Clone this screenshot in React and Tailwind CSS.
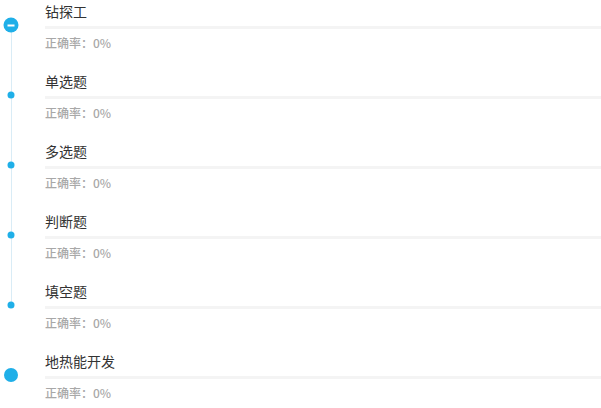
import React from 'react'

const items = [
  { title: '钻探工', kind: 'root' },
  { title: '单选题', kind: 'child' },
  { title: '多选题', kind: 'child' },
  { title: '判断题', kind: 'child' },
  { title: '填空题', kind: 'child', last: true },
  { title: '地热能开发', kind: 'big' },
]

function Marker({ kind }) {
  if (kind === 'root') {
    return (
      <div className="w-[15px] h-[15px] rounded-full bg-[#1fafe8] flex items-center justify-center">
        <div className="w-[7px] h-[2px] bg-white" />
      </div>
    )
  }
  if (kind === 'big') return <div className="w-[14px] h-[14px] rounded-full bg-[#1fafe8]" />
  return <div className="w-[7px] h-[7px] rounded-full bg-[#1fafe8]" />
}

export default function App() {
  return (
    <div className="w-[601px] h-[408px] bg-white overflow-hidden" style={{ fontFamily: '"Noto Sans CJK SC", "Noto Sans", sans-serif' }}>
      {items.map((it, i) => (
        <div key={i} className="flex h-[70px]">
          <div className="relative w-[45px] shrink-0">
            {/* connector line */}
            {it.kind !== 'big' && (
              <div
                className={`absolute left-[10.5px] w-px bg-[#d9ecf6] ${
                  it.kind === 'root' ? 'top-[25px] bottom-0' : it.last ? 'top-0 h-[25px]' : 'top-0 bottom-0'
                }`}
              />
            )}
            <div className="absolute top-[25px] left-[11px] -translate-x-1/2 -translate-y-1/2">
              <Marker kind={it.kind} />
            </div>
          </div>
          <div className="flex-1 pt-[1px]">
            <div className="h-5 leading-5 text-[14px] text-[#333]">{it.title}</div>
            <div className="mt-[5px] h-[3px] bg-[#f4f4f4]" />
            <div className="mt-[6px] h-4 leading-4 text-[12px] text-[#a8a8a8] font-medium">正确率：0%</div>
          </div>
        </div>
      ))}
    </div>
  )
}
